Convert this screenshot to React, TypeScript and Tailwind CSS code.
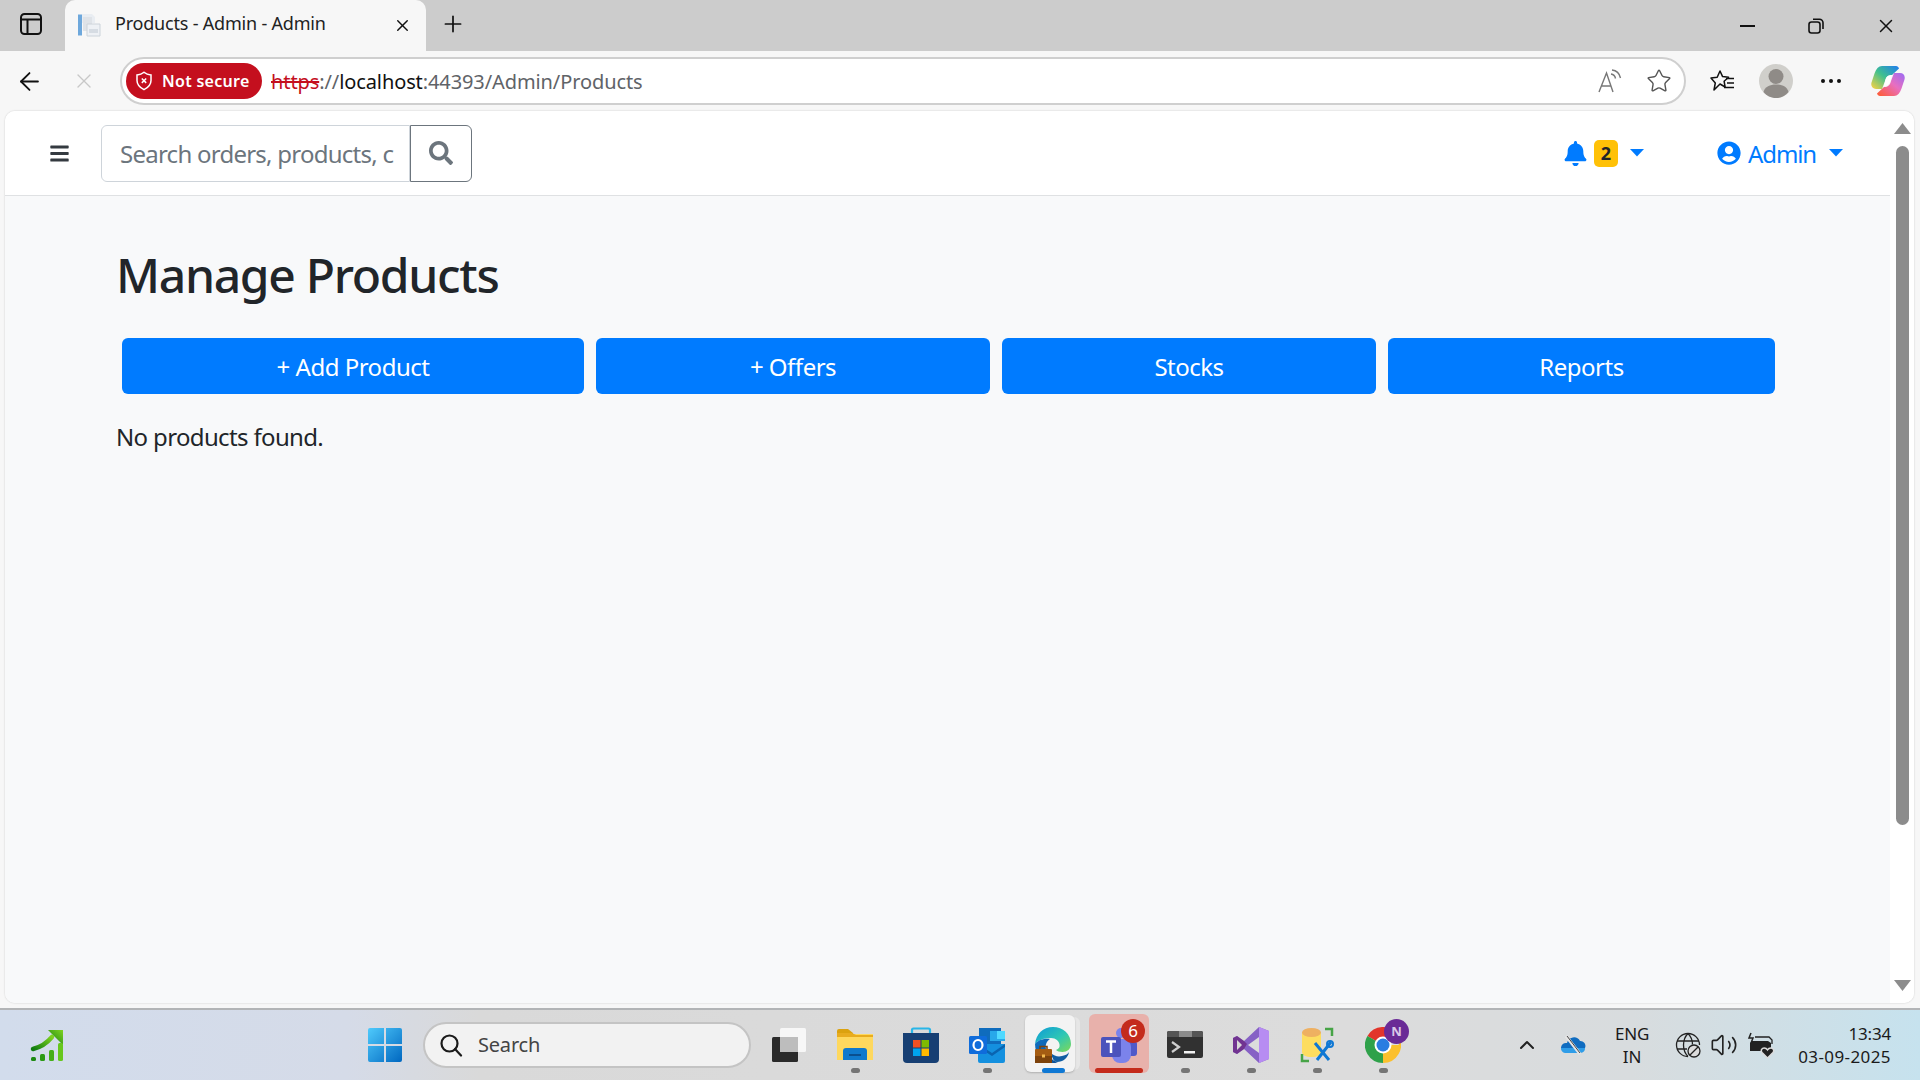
import React from "react";
import { FaBars, FaBell, FaSearch, FaUserCircle } from "react-icons/fa";
import { ArrowLeft, ChevronUp, Plus, Star, Volume2, X } from "lucide-react";

const Caret: React.FC = () => (
  <svg width="14" height="8" viewBox="0 0 14 8" className="block">
    <path d="M0 0h14L7 7.5z" fill="#007bff" />
  </svg>
);

const TabFavicon = () => (
  <svg width="24" height="24" viewBox="0 0 24 24">
    <path d="M1 1.5h4v21H1z" fill="#6ea8dc" />
    <path d="M5 1h10l3 3v6H5z" fill="#e9edf2" />
    <path d="M6 4h9v14H6z" fill="#dfe3e8" />
    <path d="M10 11h13v12H10z" fill="#eef1f5" stroke="#ccd3da" />
    <path d="M12 16h9v4h-9z" fill="#d6dce3" />
  </svg>
);

const ShieldX = () => (
  <svg width="18" height="20" viewBox="0 0 18 20" fill="none" stroke="#fff" strokeWidth="1.5">
    <path d="M9 1.2c2 1.7 4.300 2.500 7 2.700v5.600c0 4-2.700 7-7 9.200-4.300-2.200-7-5.200-7-9.200V3.900c2.700-.2 5-1 7-2.700z" />
    <path d="M6.800 7.500l4.400 4.400M11.200 7.500l-4.400 4.400" />
  </svg>
);

const ReadAloud = () => (
  <svg width="24" height="24" viewBox="0 0 24 24" fill="none" stroke="#777" strokeWidth="1.4">
    <path d="M1 23L8.500 4 15 23M3.500 17h10" />
    <path d="M13 5c2.500.3 4 1.800 4.500 4.500M14 1c4.500.5 7.500 3.500 8.500 8" />
  </svg>
);

const FavList = () => (
  <svg width="24" height="24" viewBox="0 0 24 24" fill="none" stroke="#111" strokeWidth="1.5">
    <path d="M10 2l2.600 5.600 6 .6-4.500 4 1 5.800-5.100-3L4 21l1.300-7L1 9l6.200-.8z" strokeLinejoin="round" />
    <path d="M16 9.500h8M17 14h7M14 18.500h10" />
  </svg>
);

const Avatar = () => (
  <svg width="34" height="34" viewBox="0 0 34 34">
    <circle cx="17" cy="17" r="17" fill="#d0cfcb" />
    <circle cx="17" cy="12.500" r="7.500" fill="#8f8b87" />
    <path d="M4.500 28c1.500-5.500 6.500-7.500 12.500-7.500S28 22.500 29.500 28c-3 3.700-7.500 6-12.500 6s-9.500-2.300-12.500-6z" fill="#8f8b87" />
  </svg>
);

const Copilot = () => (
  <svg width="34" height="32" viewBox="0 0 34 32">
    <defs>
      <linearGradient id="cpA" x1="0" y1="1" x2="1" y2="0">
        <stop offset="0" stopColor="#ffd23f" />
        <stop offset=".5" stopColor="#3fc08f" />
        <stop offset="1" stopColor="#1f7cf0" />
      </linearGradient>
      <linearGradient id="cpB" x1="0" y1="1" x2="1" y2="0">
        <stop offset="0" stopColor="#ff5a2d" />
        <stop offset=".55" stopColor="#e86fc0" />
        <stop offset="1" stopColor="#9a6bf5" />
      </linearGradient>
    </defs>
    <path d="M11 1h14c1.500 0 2.500 1 3 2.500L21 10c-4 0-6 2-7 6l-3 8H5c-3.500 0-5.500-3-4.500-6.500l3-9C5 4 7.500 1 11 1z" fill="url(#cpA)" />
    <path d="M23 31H9c-1.500 0-2.500-1-3-2.500l7-6.500c4 0 6-2 7-6l3-8h6c3.500 0 5.500 3 4.500 6.500l-3 9C29 28 26.500 31 23 31z" fill="url(#cpB)" />
    <path d="M15 13c1-2 3-3 6-3l-2 7c-1 2-3 4-6 4z" fill="#fff" />
  </svg>
);

const ChartLogo = () => (
  <svg width="36" height="36" viewBox="0 0 36 36">
    <defs>
      <linearGradient id="chartG" x1="0" y1="1" x2="1" y2="0">
        <stop offset="0" stopColor="#107c10" />
        <stop offset="1" stopColor="#7ed321" />
      </linearGradient>
    </defs>
    <path d="M3 22c8-2 14-6 19-12" fill="none" stroke="url(#chartG)" strokeWidth="4.500" strokeLinecap="round" />
    <path d="M18 3h15v15z" fill="url(#chartG)" />
    <rect x="1" y="30" width="5" height="4" rx="1.500" fill="#1d8a12" />
    <rect x="10" y="27" width="5" height="7" rx="1.500" fill="#2b9a14" />
    <rect x="19" y="23" width="5" height="11" rx="1.500" fill="#44ae18" />
    <rect x="28" y="16" width="5" height="18" rx="1.500" fill="#66c71d" />
  </svg>
);

const WinLogo = () => (
  <svg width="36" height="36" viewBox="0 0 36 36">
    <defs>
      <linearGradient id="winG" x1="0" y1="0" x2="1" y2="1">
        <stop offset="0" stopColor="#4fcafc" />
        <stop offset="1" stopColor="#0067c0" />
      </linearGradient>
    </defs>
    <path d="M1 3a2 2 0 0 1 2-2h14v16H1zM19 1h14a2 2 0 0 1 2 2v14H19zM1 19h16v16H3a2 2 0 0 1-2-2zM19 19h16v14a2 2 0 0 1-2 2H19z" fill="url(#winG)" />
  </svg>
);

const TaskView = () => (
  <svg width="36" height="36" viewBox="0 0 36 36">
    <rect x="9" y="1" width="26" height="24" rx="1.500" fill="#f7f7f7" />
    <rect x="1" y="10" width="26" height="25" rx="1.500" fill="#2a2a2a" />
    <rect x="9" y="10" width="18" height="15" fill="#bdbdbd" />
  </svg>
);

const FolderIcon = () => (
  <svg width="36" height="34" viewBox="0 0 36 34">
    <path d="M0 3a2 2 0 0 1 2-2h9l5 4v3H0z" fill="#dba20f" />
    <path d="M0 6h36v26H0z" fill="#fed85e" />
    <path d="M0 5h15l4 2h17v2H0z" fill="#e8ac1f" />
    <path d="M6 32v-9c0-2 1-3 3-3h18c2 0 3 1 3 3v9z" fill="#0f79cc" />
    <path d="M12 26h12v2H12z" fill="#0a4f8f" />
  </svg>
);

const StoreIcon = () => (
  <svg width="36" height="36" viewBox="0 0 36 36">
    <path d="M9 8V3a1.500 1.500 0 0 1 1.500-1.500h15A1.500 1.500 0 0 1 27 3v5" fill="none" stroke="#29b6e8" strokeWidth="2.200" />
    <path d="M0 6h36v26a4 4 0 0 1-4 4H4a4 4 0 0 1-4-4z" fill="#173f73" />
    <path d="M10 13h7.500v7.500H10z" fill="#f25022" />
    <path d="M18.500 13H26v7.500h-7.500z" fill="#7fba00" />
    <path d="M10 21.500h7.500V29H10z" fill="#00a4ef" />
    <path d="M18.500 21.500H26V29h-7.500z" fill="#ffb900" />
  </svg>
);

const OutlookIcon = () => (
  <svg width="36" height="36" viewBox="0 0 36 36">
    <path d="M10 1h22v16H10z" fill="#0f6cbd" />
    <path d="M21 4h15v10H21z" fill="#28a8ea" />
    <path d="M28 4h8v8h-8z" fill="#50d9ff" />
    <path d="M9 17h27v17a2 2 0 0 1-2 2H11a2 2 0 0 1-2-2z" fill="#1490df" />
    <path d="M9 17l14 9 13-9v3L23 29 9 20z" fill="#0a64b0" />
    <rect x="0" y="9" width="18" height="18" rx="1.500" fill="#0f6cdb" />
    <ellipse cx="9" cy="18" rx="4.500" ry="5" fill="none" stroke="#fff" strokeWidth="2.200" />
  </svg>
);

const EdgeIcon = () => (
  <svg width="36" height="36" viewBox="0 0 36 36">
    <defs>
      <linearGradient id="edgeA" x1="0" y1="0" x2="1" y2="1">
        <stop offset="0" stopColor="#0c9ad8" />
        <stop offset=".55" stopColor="#2fc7b4" />
        <stop offset="1" stopColor="#7ed957" />
      </linearGradient>
      <linearGradient id="edgeB" x1="0" y1="0" x2="1" y2="1">
        <stop offset="0" stopColor="#1172c4" />
        <stop offset="1" stopColor="#0b4f96" />
      </linearGradient>
    </defs>
    <path d="M0 17C1 7 8 0 18 0c10 0 18 7 18 17 0 5-4 8-8.500 8-3 0-5.500-1-6.500-2 3-1 4-3 3.500-5.500C24 14 21 11 16 11 8 11 2 14 0 17z" fill="url(#edgeA)" />
    <path d="M0 17c2-3 8-6 15-5-3 2-5 5-4 10 1 6 6 12 12 13-2 1-3 1-5 1C8 36 0 28 0 17z" fill="url(#edgeB)" />
    <path d="M16 26c3 3 7 4 11 3s6-2 7-4c-1 6-6 10-12 10-3 0-5-4-6-9z" fill="#115ea3" />
    <rect x="0" y="22" width="17" height="14" rx="1" fill="#a45c12" />
    <path d="M0 29h17v7H0z" fill="#7d430c" />
    <path d="M5 22v-2.500h7V22" fill="none" stroke="#7d430c" strokeWidth="1.500" />
    <rect x="7" y="27.500" width="3" height="3" fill="#f3b94f" />
  </svg>
);

const TeamsIcon = () => (
  <svg width="36" height="36" viewBox="0 0 36 36">
    <circle cx="20" cy="6" r="5" fill="#7b83eb" />
    <circle cx="31" cy="9" r="4" fill="#5059c9" />
    <rect x="26" y="14" width="10" height="15" rx="3" fill="#5059c9" />
    <rect x="11" y="12" width="19" height="24" rx="8" fill="#7b83eb" />
    <rect x="0" y="10" width="20" height="20" rx="2" fill="#4b53bc" />
    <path d="M5 14.500h10M10 14.500V26" stroke="#fff" strokeWidth="2.500" />
  </svg>
);

const TerminalIcon = () => (
  <svg width="36" height="28" viewBox="0 0 36 28">
    <rect width="36" height="27" rx="2" fill="#313131" />
    <path d="M2 0h10v6H0V2a2 2 0 0 1 2-2z" fill="#555" />
    <path d="M12 0h13v6H12z" fill="#8c8c8c" />
    <path d="M25 0h9a2 2 0 0 1 2 2v4H25z" fill="#555" />
    <path d="M5 11l7 5-7 5" fill="none" stroke="#cfcfcf" strokeWidth="2.200" />
    <path d="M17 20h11v2.500H17z" fill="#f2f2f2" />
  </svg>
);

const VsIcon = () => (
  <svg width="36" height="36" viewBox="0 0 36 36">
    <path d="M26 0l10 4v28l-10 4-15-14-7 5-4-2V11l4-2 7 5z" fill="#8661c5" />
    <path d="M26 0l10 4v28l-10 4z" fill="#b78cf2" />
    <path d="M26 10v16l-11-8z" fill="#dcdcdc" />
    <path d="M0 11l4-2 7 5 3 3-3 5-7 5-4-2z" fill="#68217a" opacity=".7" />
    <path d="M4 13l5 5-5 5z" fill="#d9d9d9" />
  </svg>
);

const DbToolsIcon = () => (
  <svg width="36" height="36" viewBox="0 0 36 36">
    <path d="M3 5v20c0 3 4 5 9.500 5S22 28 22 25V5z" fill="#fddd60" />
    <ellipse cx="12.500" cy="5.500" rx="9.500" ry="4.500" fill="#eeb061" />
    <path d="M26 2h7v7M10 34H3v-7" fill="none" stroke="#47a447" strokeWidth="2.500" />
    <path d="M16 16l14 17M32 15L18 33" stroke="#0f78d4" strokeWidth="3" />
    <circle cx="31" cy="17" r="3" fill="none" stroke="#0f78d4" strokeWidth="2" />
  </svg>
);

const ChromeIcon = () => (
  <svg width="36" height="36" viewBox="0 0 36 36">
    <path d="M18 18L2.400 9A18 18 0 0 1 33.600 9z" fill="#e2352b" />
    <path d="M18 18L2.400 9A18 18 0 0 0 18 36z" fill="#2fa14a" />
    <path d="M18 18h15.600a18 18 0 0 0 0-9zM18 18L33.600 9A18 18 0 0 1 18 36z" fill="#fbc02d" />
    <circle cx="18" cy="18" r="8.500" fill="#fff" />
    <circle cx="18" cy="18" r="6.500" fill="#2a7de1" />
  </svg>
);

const SearchGlass = () => (
  <svg width="24" height="24" viewBox="0 0 24 24" fill="none" stroke="#1a1a1a" strokeWidth="2.200">
    <circle cx="10.500" cy="10.500" r="8" />
    <path d="M16 16l6 6.500" strokeLinecap="round" />
  </svg>
);

const OneDriveOff = () => (
  <svg width="26" height="20" viewBox="0 0 26 20">
    <path d="M7 8a7 7 0 0 1 13-2 5 5 0 0 1 5 7H1a5 5 0 0 1 6-5z" fill="#0f6cc0" />
    <path d="M1 13h24a4.500 4.500 0 0 1-4.500 5H5a4.500 4.500 0 0 1-4-5z" fill="#2f9de8" />
    <path d="M6 1l14 18" stroke="#e6e6e6" strokeWidth="3" />
    <path d="M7 1l13 17" stroke="#444" strokeWidth="1" />
  </svg>
);

const GlobeBlocked = () => (
  <svg width="26" height="26" viewBox="0 0 26 26" fill="none" stroke="#222" strokeWidth="1.300">
    <path d="M13 24.500A11.500 11.500 0 1 1 24.500 13" />
    <path d="M13 1.500c-3 3-4.500 7-4.500 11.500s1.500 8.500 4.500 11.500M13 1.500c3 3 4.500 7 4.500 11M2 9h22M2 17h10" />
    <circle cx="19" cy="19" r="6" fill="#dcdcdc" />
    <path d="M15 23l8-8" />
  </svg>
);

const BatteryHeart = () => (
  <svg width="28" height="28" viewBox="0 0 28 28">
    <path d="M5 10h16l3 2v8H3v-8z" fill="#222" />
    <path d="M4 2L2 7l4 0-2 5" fill="none" stroke="#222" strokeWidth="1.500" />
    <path d="M8 6h14l3 3v4" fill="none" stroke="#222" strokeWidth="1.300" />
    <path d="M20.500 27l-5.500-5.500c-1.700-2.200 0-4.500 2.200-4.500 1.400 0 2.600.8 3.300 1.900.7-1.100 1.900-1.900 3.300-1.900 2.200 0 3.900 2.300 2.200 4.500z" fill="#222" stroke="#dcdcdc" strokeWidth="1.500" />
  </svg>
);

// one taskbar slot: icon plus the running indicator under it
const TaskSlot: React.FC<{ running?: boolean; children: React.ReactNode }> = ({ running, children }) => (
  <div className="relative w-[66px] h-[70px] flex items-center justify-center">
    {children}
    {running && <span className="absolute bottom-[7px] w-[9px] h-[5px] rounded-full bg-[#757575]" />}
  </div>
);

const ACTIONS = [
  { label: "+ Add Product", width: "w-[462px]" },
  { label: "+ Offers", width: "w-[394px]" },
  { label: "Stocks", width: "w-[374px]" },
  { label: "Reports", width: "w-[387px]" },
];

export default function App() {
  return (
    <div className="w-[1920px] h-[1080px] overflow-hidden flex flex-col bg-[#f7f7f7] text-[#212529] font-['Noto_Sans','Open_Sans',sans-serif]">
      {/* title bar */}
      <div className="h-[51px] bg-[#cccccc] flex items-center">
        <svg width="22" height="22" viewBox="0 0 22 22" fill="none" stroke="#111" strokeWidth="2" className="ml-[20px] mb-[4px]">
          <rect x="1" y="1" width="20" height="20" rx="3.500" />
          <path d="M1 6.500h20M7.500 6.500V21" />
        </svg>
        <div className="ml-[23px] w-[361px] h-[51px] self-end bg-[#f7f7f7] rounded-t-[10px] flex items-center pl-[12px]">
          <span className="mb-[2px]"><TabFavicon /></span>
          <span className="ml-[14px] mb-[4px] text-[18px] text-[#222] tracking-[-0.2px] whitespace-nowrap">Products - Admin - Admin</span>
          <X size={19} strokeWidth={1.8} className="ml-auto mr-[14px] text-[#111]" />
        </div>
        <Plus size={26} strokeWidth={1.6} className="ml-[14px] mb-[4px] text-[#111]" />
        <div className="ml-auto flex items-center">
          <span className="w-[15px] h-[2px] bg-[#111] mr-[53px]" />
          <svg width="16" height="16" viewBox="0 0 16 16" fill="none" stroke="#111" strokeWidth="1.600" className="mr-[51px]">
            <rect x="1" y="4" width="11" height="11" rx="2.500" />
            <path d="M5 1.200h6.500A3.500 3.500 0 0 1 15 4.700V11" />
          </svg>
          <X size={22} strokeWidth={1.6} className="mr-[23px] text-[#111]" />
        </div>
      </div>

      {/* toolbar */}
      <div className="h-[60px] flex items-center">
        <ArrowLeft size={29} strokeWidth={1.5} className="ml-[15px] text-[#111]" />
        <X size={24} strokeWidth={1.4} className="ml-[28px] text-[#c8c8c8]" />
        <div className="ml-[24px] w-[1566px] h-[48px] bg-white border-2 border-[#cfcfcf] rounded-full flex items-center pl-[4px] pr-[12px]">
          <div className="w-[136px] h-[36px] rounded-full bg-[#c40f1e] text-white flex items-center pl-[9px]">
            <ShieldX />
            <span className="ml-[9px] text-[16px] font-semibold tracking-[0.3px] whitespace-nowrap">Not secure</span>
          </div>
          <span className="ml-[9px] pt-[1px] text-[20px] text-[#5f6368] tracking-[-0.1px] whitespace-nowrap">
            <span className="text-[#c40f1e] line-through">https</span>
            ://<span className="text-[#111]">localhost</span>:44393/Admin/Products
          </span>
          <div className="ml-auto flex items-center gap-[24px]">
            <ReadAloud />
            <Star size={26} strokeWidth={1.3} className="text-[#555]" />
          </div>
        </div>
        <div className="ml-[24px]"><FavList /></div>
        <div className="ml-[25px]"><Avatar /></div>
        <div className="ml-[28px] w-[20px] flex justify-between">
          <span className="w-[4px] h-[4px] rounded-full bg-[#111]" />
          <span className="w-[4px] h-[4px] rounded-full bg-[#111]" />
          <span className="w-[4px] h-[4px] rounded-full bg-[#111]" />
        </div>
        <div className="ml-[30px]"><Copilot /></div>
      </div>

      {/* page */}
      <div className="ml-[5px] w-[1909px] h-[892px] bg-white rounded-[10px] flex overflow-hidden shadow-[0_0_2px_rgba(0,0,0,0.2)]">
        <div className="w-[1885px] flex flex-col">
          <nav className="h-[85px] bg-white border-b border-[#dfe1e3] flex items-center">
            <FaBars size={21} className="ml-[44px] text-[#343a40]" />
            <div className="ml-[31px] flex h-[57px] w-[371px]">
              <div className="w-[309px] border border-[#ced4da] rounded-l-[6px] pl-[18px] flex items-center overflow-hidden">
                <span className="block pt-[2px] whitespace-nowrap text-[24px] text-[#6c757d] tracking-[-0.75px]">Search orders, products, c</span>
              </div>
              <div className="w-[62px] border border-[#6c757d] rounded-r-[6px] flex items-center justify-center">
                <FaSearch size={24} className="text-[#6c757d]" />
              </div>
            </div>
            <FaBell size={25} className="ml-[1091px] text-[#007bff]" />
            <span className="ml-[6px] w-[24px] h-[27px] rounded-[5px] bg-[#ffc107] text-[18px] font-bold text-[#212529] flex items-center justify-center">2</span>
            <span className="ml-[12px]"><Caret /></span>
            <FaUserCircle size={24} className="ml-[73px] text-[#007bff]" />
            <span className="ml-[7px] pt-[2px] text-[24px] text-[#007bff] tracking-[-1.1px]">Admin</span>
            <span className="ml-[13px]"><Caret /></span>
          </nav>
          <main className="flex-1 bg-[#f8f9fa] pl-[111px]">
            <h1 className="mt-[43px] text-[48px] leading-[72px] font-medium tracking-[-1.3px] text-[#212529]">Manage Products</h1>
            <div className="mt-[27px] ml-[6px] flex gap-[12px]">
              {ACTIONS.map((a) => (
                <button key={a.label} className={`${a.width} h-[56px] pt-[1px] rounded-[6px] bg-[#007bff] text-white text-[24px] tracking-[-0.5px]`}>
                  {a.label}
                </button>
              ))}
            </div>
            <p className="mt-[25px] text-[24px] leading-[36px] tracking-[-0.65px] text-[#212529]">No products found.</p>
          </main>
        </div>
        <div className="w-[24px] bg-white flex flex-col items-center">
          <svg width="17" height="11" viewBox="0 0 17 11" className="mt-[12px]">
            <path d="M8.500 0L17 11H0z" fill="#8c8c8c" />
          </svg>
          <div className="mt-[12px] w-[13px] h-[679px] rounded-full bg-[#8c8c8c]" />
          <svg width="17" height="11" viewBox="0 0 17 11" className="mt-[155px]">
            <path d="M0 0h17L8.500 11z" fill="#8c8c8c" />
          </svg>
        </div>
      </div>

      {/* taskbar */}
      <div className="mt-[5px] h-[72px] border-t-2 border-[#b2b4b6] flex items-center bg-[linear-gradient(90deg,#d2dcec_0%,#d5dbe8_18%,#d9d9d9_25%,#dcdcdc_70%,#d8dcde_85%,#c6e2ee_100%)]">
        <div className="ml-[30px]"><ChartLogo /></div>
        <div className="ml-[301px] w-[36px] flex"><WinLogo /></div>
        <div className="ml-[20px] w-[328px] h-[46px] rounded-full bg-[#f2f2f2] border-2 border-[#c4c4c4] flex items-center pl-[14px]">
          <SearchGlass />
          <span className="ml-[15px] text-[20px] text-[#444] tracking-[-0.2px]">Search</span>
        </div>
        <div className="ml-[5px] flex">
          <TaskSlot><TaskView /></TaskSlot>
          <TaskSlot running><FolderIcon /></TaskSlot>
          <TaskSlot><StoreIcon /></TaskSlot>
          <TaskSlot running><OutlookIcon /></TaskSlot>
          <TaskSlot>
            <span className="absolute right-[6px] top-[7px] w-[50px] h-[53px] rounded-[6px] bg-[#e6e6e6]" />
            <span className="absolute left-[5px] top-[5px] w-[50px] h-[57px] rounded-[6px] bg-[#f3f3f3] shadow-[0_1px_2px_rgba(0,0,0,0.2)]" />
            <span className="relative"><EdgeIcon /></span>
            <span className="absolute bottom-[7px] left-[22px] w-[23px] h-[5px] rounded-full bg-[#0f78d4]" />
          </TaskSlot>
          <TaskSlot>
            <span className="absolute left-[3px] top-[4px] w-[60px] h-[59px] rounded-[6px] bg-[#e8b1ab]" />
            <span className="relative"><TeamsIcon /></span>
            <span className="absolute right-[7px] top-[9px] w-[24px] h-[24px] rounded-full bg-[#c42b1c] text-white text-[17px] flex items-center justify-center">6</span>
            <span className="absolute bottom-[7px] left-[9px] w-[48px] h-[5px] rounded-full bg-[#c42b1c]" />
          </TaskSlot>
          <TaskSlot running><TerminalIcon /></TaskSlot>
          <TaskSlot running><VsIcon /></TaskSlot>
          <TaskSlot running><DbToolsIcon /></TaskSlot>
          <TaskSlot running>
            <ChromeIcon />
            <span className="absolute right-[7px] top-[9px] w-[25px] h-[25px] rounded-full bg-[#6a2a96] text-[#d9c7e8] text-[13px] font-bold flex items-center justify-center">N</span>
          </TaskSlot>
        </div>
        <ChevronUp size={24} strokeWidth={2} className="ml-[99px] text-[#222]" />
        <div className="ml-[21px]"><OneDriveOff /></div>
        <div className="ml-[26px] w-[40px] text-center text-[17px] leading-[23px] text-[#1a1a1a] tracking-[-0.2px]">
          <div>ENG</div>
          <div>IN</div>
        </div>
        <div className="ml-[23px]"><GlobeBlocked /></div>
        <Volume2 size={28} strokeWidth={1.4} className="ml-[9px] text-[#222]" />
        <div className="ml-[9px]"><BatteryHeart /></div>
        <div className="ml-auto mr-[29px] text-right text-[17px] leading-[23px] text-[#1a1a1a]">
          <div className="tracking-[-0.2px]">13:34</div>
          <div className="tracking-[0.4px]">03-09-2025</div>
        </div>
      </div>
    </div>
  );
}
